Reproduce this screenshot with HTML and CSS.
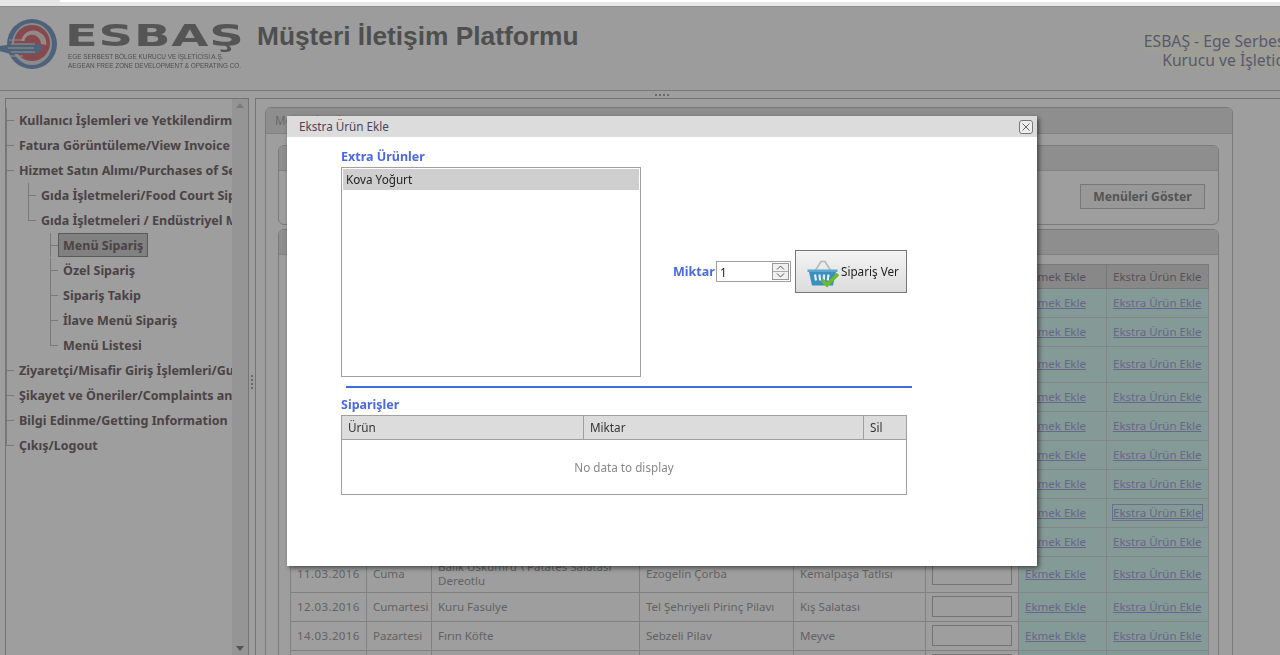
FILE: index.html
```html
<!DOCTYPE html>
<html lang="tr">
<head>
<meta charset="utf-8">
<title>Müşteri İletişim Platformu</title>
<link rel="stylesheet" href="styles.css">
</head>
<body>
<div class="chrome"><div class="chrome-bar"></div></div>
<header class="header">
  <div class="brand">
    <svg class="logo" viewBox="0 0 60 50" width="60" height="50" aria-hidden="true">
      <ellipse cx="33" cy="25" rx="25" ry="25" fill="#7e9fc4"/>
      <ellipse cx="33" cy="25" rx="20" ry="21" fill="#dbe2ea"/>
      <ellipse cx="33" cy="24" rx="18" ry="18" fill="#d8777e"/>
      <path d="M22 22c2-9 11-13 18-9 6 3 8 8 7 13l-5-1c0-4-3-8-7-9-5-1-8 1-10 6z" fill="#f0dcdd"/>
      <path d="M0 27l24-3 18 2 2 3-6 6H12L0 32z" fill="#7e9fc4"/>
      <path d="M12 25h24M9 29h26M12 33h24" stroke="#d5d5d5" stroke-width="1.3" fill="none"/>
      <path d="M10 21h16M10 37h14" stroke="#e8e8e8" stroke-width="1" fill="none"/>
    </svg>
    <div class="brand-text">
      <div class="brand-name">ESBAŞ</div>
      <div class="brand-sub">EGE SERBEST BÖLGE KURUCU VE İŞLETİCİSİ A.Ş.</div>
      <div class="brand-sub">AEGEAN FREE ZONE DEVELOPMENT &amp; OPERATING CO.</div>
    </div>
  </div>
  <h1 class="app-title">Müşteri İletişim Platformu</h1>
  <div class="header-note">
    <div><span>ESBAŞ - Ege Serbest Bölgesi</span></div>
    <div><span>Kurucu ve İşleticisi A.Ş.</span></div>
  </div>
</header>
<div class="split-h"><i></i></div>
<main class="panes">
  <nav class="side">
    <div class="tree-wrap">
      <ul class="tree">
        <li><a>Kullanıcı İşlemleri ve Yetkilendirme</a></li>
        <li><a>Fatura Görüntüleme/View Invoice</a></li>
        <li><a>Hizmet Satın Alımı/Purchases of Services</a>
          <ul class="tree">
            <li><a>Gıda İşletmeleri/Food Court Sipariş</a></li>
            <li><a>Gıda İşletmeleri / Endüstriyel Mutfak</a>
              <ul class="tree">
                <li><a class="selected">Menü Sipariş</a></li>
                <li><a>Özel Sipariş</a></li>
                <li><a>Sipariş Takip</a></li>
                <li><a>İlave Menü Sipariş</a></li>
                <li><a>Menü Listesi</a></li>
              </ul>
            </li>
          </ul>
        </li>
        <li><a>Ziyaretçi/Misafir Giriş İşlemleri/Guest</a></li>
        <li><a>Şikayet ve Öneriler/Complaints and</a></li>
        <li><a>Bilgi Edinme/Getting Information</a></li>
        <li><a>Çıkış/Logout</a></li>
      </ul>
    </div>
    <div class="scroll"><b class="up"></b><b class="down"></b></div>
  </nav>
  <div class="split-v"><i></i></div>
  <section class="content">
    <div class="card outer">
      <div class="card-head">Menü Sipariş</div>
      <div class="outer-body">
        <div class="card filter">
          <div class="card-head"></div>
          <div class="filter-body"><button class="btn-show">Menüleri Göster</button></div>
        </div>
        <div class="card list">
          <div class="card-head"></div>
          <div class="list-body">
            <table class="menu">
              <colgroup>
                <col class="c-date"><col class="c-day"><col class="c-main"><col class="c-soup"><col class="c-sweet"><col class="c-qty"><col class="c-bread"><col class="c-extra">
              </colgroup>
              <thead><tr><th></th><th></th><th></th><th></th><th></th><th></th><th>Ekmek Ekle</th><th>Ekstra Ürün Ekle</th></tr></thead>
              <tbody>
                <tr><td colspan="6"></td><td class="act"><a>Ekmek Ekle</a></td><td class="act"><a>Ekstra Ürün Ekle</a></td></tr>
                <tr><td colspan="6"></td><td class="act"><a>Ekmek Ekle</a></td><td class="act"><a>Ekstra Ürün Ekle</a></td></tr>
                <tr class="tall"><td colspan="6"></td><td class="act"><a>Ekmek Ekle</a></td><td class="act"><a>Ekstra Ürün Ekle</a></td></tr>
                <tr><td colspan="6"></td><td class="act"><a>Ekmek Ekle</a></td><td class="act"><a>Ekstra Ürün Ekle</a></td></tr>
                <tr><td colspan="6"></td><td class="act"><a>Ekmek Ekle</a></td><td class="act"><a>Ekstra Ürün Ekle</a></td></tr>
                <tr><td colspan="6"></td><td class="act"><a>Ekmek Ekle</a></td><td class="act"><a>Ekstra Ürün Ekle</a></td></tr>
                <tr><td colspan="6"></td><td class="act"><a>Ekmek Ekle</a></td><td class="act"><a>Ekstra Ürün Ekle</a></td></tr>
                <tr><td colspan="6"></td><td class="act"><a>Ekmek Ekle</a></td><td class="act"><a class="focused">Ekstra Ürün Ekle</a></td></tr>
                <tr><td colspan="6"></td><td class="act"><a>Ekmek Ekle</a></td><td class="act"><a>Ekstra Ürün Ekle</a></td></tr>
                <tr class="tall"><td class="date">11.03.2016</td><td>Cuma</td><td class="wrap">Balık Uskumru \ Patates Salatası Dereotlu</td><td>Ezogelin Çorba</td><td>Kemalpaşa Tatlısı</td><td><input class="qty" type="text"></td><td class="act"><a>Ekmek Ekle</a></td><td class="act"><a>Ekstra Ürün Ekle</a></td></tr>
                <tr><td class="date">12.03.2016</td><td>Cumartesi</td><td>Kuru Fasulye</td><td>Tel Şehriyeli Pirinç Pilavı</td><td>Kış Salatası</td><td><input class="qty" type="text"></td><td class="act"><a>Ekmek Ekle</a></td><td class="act"><a>Ekstra Ürün Ekle</a></td></tr>
                <tr><td class="date">14.03.2016</td><td>Pazartesi</td><td>Fırın Köfte</td><td>Sebzeli Pilav</td><td>Meyve</td><td><input class="qty" type="text"></td><td class="act"><a>Ekmek Ekle</a></td><td class="act"><a>Ekstra Ürün Ekle</a></td></tr>
                <tr><td></td><td></td><td></td><td></td><td></td><td><input class="qty" type="text"></td><td class="act"></td><td class="act"></td></tr>
              </tbody>
            </table>
          </div>
        </div>
      </div>
    </div>
  </section>
</main>

<div class="overlay"></div>
<div class="modal" role="dialog">
  <div class="modal-title"><span>Ekstra Ürün Ekle</span><button class="close" aria-label="Kapat"><svg viewBox="0 0 8 8" width="8" height="8"><path d="M0.5 0.5l7 7M7.5 0.5l-7 7" stroke="#666" stroke-width="1" fill="none"/></svg></button></div>
  <div class="modal-body">
    <div class="label">Extra Ürünler</div>
    <div class="picker">
      <div class="listbox"><div class="option">Kova Yoğurt</div></div>
      <div class="order">
        <span class="label miktar">Miktar</span>
        <div class="spin"><span class="spin-val">1</span>
          <span class="spin-btns">
            <b><svg viewBox="0 0 9 5" width="9" height="5"><path d="M1 4.5L4.5 1 8 4.5" stroke="#555" fill="none"/></svg></b>
            <b><svg viewBox="0 0 9 5" width="9" height="5"><path d="M1 .5L4.5 4 8 .5" stroke="#555" fill="none"/></svg></b>
          </span>
        </div>
        <button class="btn-order">
          <svg class="basket" viewBox="0 0 34 30" width="34" height="30" aria-hidden="true">
            <path d="M9 13L15 3.5h4L25 13" stroke="#b8b8b8" stroke-width="1.6" fill="none"/>
            <path d="M1.5 11.5h30v2.5h-30z" fill="#5aa6cf"/>
            <path d="M3 14h27l-3 13.5H6z" fill="#3a8fbf"/>
            <path d="M9 16.5l1 6M13.5 16.5l.6 6M18 16.5l-.2 6M22.5 16.5l-.8 6" stroke="#dff0f8" stroke-width="2.2" fill="none"/>
            <path d="M16 22l5 5 11-11" stroke="#6cbb2a" stroke-width="3.6" fill="none"/>
          </svg>
          <span>Sipariş Ver</span>
        </button>
      </div>
    </div>
    <div class="rule"></div>
    <div class="label orders">Siparişler</div>
    <table class="orders-table">
      <colgroup><col class="o-item"><col class="o-qty"><col class="o-del"></colgroup>
      <thead><tr><th>Ürün</th><th>Miktar</th><th>Sil</th></tr></thead>
      <tbody><tr><td colspan="3">No data to display</td></tr></tbody>
    </table>
  </div>
</div>
</body>
</html>
```
FILE: styles.css
```css
* { box-sizing: border-box; }
html, body { margin: 0; height: 100%; overflow: hidden; }
body {
  width: 1280px;
  height: 655px;
  display: flex;
  flex-direction: column;
  background: #fff;
  color: #333;
  font: 11.7px "Noto Sans", "Liberation Sans", sans-serif;
}
ul { list-style: none; margin: 0; padding: 0; }

.chrome { height: 7px; flex: none; background: #e6e6e6; border-bottom: 1px solid #8f8f8f; padding-left: 60px; }
.chrome-bar { height: 2px; background: #fff; }

.header { height: 84px; flex: none; display: flex; align-items: flex-start; background: #fcfcfc; overflow: hidden; border-bottom: 1px solid #c4c4c4; }
.brand { display: flex; width: 257px; flex: none; padding-top: 12px; }
.logo { flex: none; margin: 0 9px 0 -1px; filter: blur(.4px); }
.brand-text { width: 173px; flex: none; filter: blur(.35px); }
.brand-name { font: 900 30px/30px "DejaVu Sans", sans-serif; letter-spacing: .5px; color: #8a8a8a; transform-origin: 0 0; transform: scaleX(1.6); height: 34px; padding-top: 2px; margin-left: -3px; white-space: nowrap; }
.brand-sub { font: 6.4px/8.5px "Liberation Sans", sans-serif; white-space: nowrap; color: #808080; }
.app-title { margin: 14px 0 0; font: bold 26.3px/30px "Liberation Sans", sans-serif; color: #808080; white-space: nowrap; }
.header-note { margin: 25px -68px 0 auto; flex: none; text-align: center; font-size: 15.7px; line-height: 19px; color: #8f8fb8; white-space: nowrap; }
.header-note span { background: linear-gradient(#fffff0, #fffff0) center / 100% 18px no-repeat; }

.split-h { height: 7px; flex: none; display: flex; justify-content: center; align-items: center; background: #fff; padding-left: 43px; }
.split-h i, .split-v i { display: block; }
.split-h i { width: 14px; border-top: 2px dotted #aaa; }

.panes { flex: 1; display: flex; min-height: 0; }
.side { width: 244px; margin-left: 5px; flex: none; display: flex; border: 1px solid #bbb; border-bottom: 0; background: #fff; overflow: hidden; }
.tree-wrap { flex: 1; min-width: 0; padding-top: 9px; overflow: hidden; }
.scroll { width: 16px; flex: none; background: #f1f1f1; position: relative; }
.scroll b { position: absolute; left: 4px; border: 4px solid transparent; }
.scroll .up { top: 0; border-bottom: 5px solid #c4c4c4; }
.scroll .down { bottom: 0; border-top: 5px solid #888; }

.tree { font: bold 12.5px/25px "Noto Sans", sans-serif; color: #7a6c70; white-space: nowrap; }
.tree > li { position: relative; padding-left: 13px; }
.tree .tree { margin-left: 9px; }
.tree .tree > li { padding-left: 13px; }
.tree > li::before { content: ""; position: absolute; left: 0; top: 12px; width: 8px; border-top: 1px solid #c4c4c4; }
.tree > li::after { content: ""; position: absolute; left: 0; top: 0; bottom: 0; border-left: 1px solid #c4c4c4; }
.tree > li:last-child::after { bottom: auto; height: 13px; }
.tree a { display: block; height: 25px; line-height: 24px; padding-top: 1px; white-space: nowrap; width: fit-content; }
.tree .selected { height: 24px; line-height: 23px; padding: 0 4px; margin: 0 0 1px -5px; border: 1px solid #909090; background: #d0d0d0; }

.split-v { width: 6px; flex: none; display: flex; align-items: center; justify-content: center; background: #fff; padding-right: 1px; }
.split-v i { height: 14px; border-left: 2px dotted #aaa; margin-top: 10px; }

.content { flex: 1; min-width: 0; border: 1px solid #bbb; border-bottom: 0; border-right: 0; padding: 8px 47px 0 9px; overflow: hidden; background: #fff; }
.card { border: 1px solid #c6c6c6; border-radius: 6px; background: #fff; }
.card-head { height: 25px; border-bottom: 1px solid #d0d0d0; background: #e6e6e6; border-radius: 5px 5px 0 0; padding: 4px 9px; color: #aaa; }
.outer > .card-head { height: 26px; white-space: nowrap; }
.outer-body { padding: 11px 13px 0 12px; }
.filter { height: 80px; margin-bottom: 4px; }
.filter-body { display: flex; justify-content: flex-end; padding: 13px 13px 0 0; }
.btn-show { width: 125px; height: 25px; padding: 0 0 1px; background: #f5f5f5; border: 1px solid #c0c0c0; font: bold 12.2px "Noto Sans", sans-serif; color: #888; }
.list-body { padding: 9px 11px 0; }

.menu { width: 918px; table-layout: fixed; border-collapse: collapse; font-size: 11.5px; color: #a0a0a0; white-space: nowrap; }
.c-date { width: 76px; } .c-day { width: 65px; } .c-main { width: 208px; } .c-soup { width: 154px; }
.c-sweet { width: 132px; } .c-qty { width: 93px; } .c-bread { width: 88px; } .c-extra { width: 102px; }
.menu th { height: 24px; font-weight: normal; background: #dcdcdc; border: 1px solid #c4c4c4; color: #8e8494; padding: 0 6px; text-align: left; }
.menu td { height: 29px; padding: 0 6px 1px; border: 1px solid #d0d0d0; line-height: 14px; }
.menu .tall td { height: 36px; }
.menu .wrap { white-space: normal; }
.menu .date { letter-spacing: .4px; }
.menu .act { background: #d6f8f2; border-color: #d4d8d8; }
.menu a { color: #a8a6e0; text-decoration: underline; }
.menu a.focused { outline: 1px solid #b0b4e8; }
.qty { display: block; width: 80px; height: 21px; border: 1px solid #bbb; background: #fff; }

.overlay { position: fixed; inset: 7px 0 0 0; background: rgba(0, 0, 0, .38); }
.modal { position: fixed; left: 287px; top: 116px; width: 750px; height: 450px; background: #fff; box-shadow: 2px 2px 5px rgba(0,0,0,.55); color: #222; }
.modal-title { height: 21px; padding: 0 4px 0 12px; display: flex; align-items: center; justify-content: space-between; background: #dcdcdc; color: #4f4358; }
.modal-title span { padding-bottom: 2px; }
.close { width: 14px; height: 14px; padding: 0; display: flex; align-items: center; justify-content: center; background: #eee; border: 1px solid #777; border-radius: 3px; }
.modal-body { padding: 12px 0 0 54px; }
.label { font: bold 12.5px/16px "Noto Sans", sans-serif; color: #4a69e2; }
.miktar { width: 40px; padding-top: 1px; white-space: nowrap; }
.picker { display: flex; align-items: center; height: 210px; margin-top: 2px; }
.listbox { width: 300px; height: 210px; flex: none; padding: 1px; border: 1px solid #a0a0a0; }
.option { height: 21px; line-height: 21px; padding-left: 3px; background: #cfcfcf; }
.order { display: flex; align-items: center; margin-left: 32px; margin-top: -1px; }
.spin { width: 75px; height: 21px; margin-left: 3px; display: flex; justify-content: space-between; align-items: center; border: 1px solid #a0a0a0; padding: 1px 1px 1px 3px; }
.spin-btns { width: 17px; height: 17px; display: flex; flex-direction: column; border: 1px solid #999; background: #f0f0f0; }
.spin-btns b { flex: 1; display: flex; align-items: center; justify-content: center; border-bottom: 1px solid #aaa; }
.spin-btns b:last-child { border-bottom: 0; }
.btn-order { width: 112px; height: 43px; margin-left: 4px; padding: 0 0 0 10px; display: flex; align-items: center; gap: 1px; border: 1px solid #777; background: linear-gradient(#f4f4f4, #dcdcdc); font: 11.7px "Noto Sans", "Liberation Sans", sans-serif; color: #222; }
.btn-order span { padding-bottom: 2px; }
.basket { flex: none; margin-top: 2px; }
.rule { width: 566px; height: 2px; margin: 9px 0 0 5px; background: #4169e1; }
.orders { margin-top: 9px; }
.orders-table { width: 565px; table-layout: fixed; border-collapse: collapse; margin-top: 2px; }
.o-item { width: 242px; } .o-qty { width: 280px; } .o-del { width: 43px; }
.orders-table th { height: 24px; padding: 0 6px 1px; font-weight: normal; text-align: left; background: #dcdcdc; border: 1px solid #a0a0a0; color: #333; }
.orders-table td { height: 55px; text-align: center; color: #888; border: 1px solid #a0a0a0; }
```
